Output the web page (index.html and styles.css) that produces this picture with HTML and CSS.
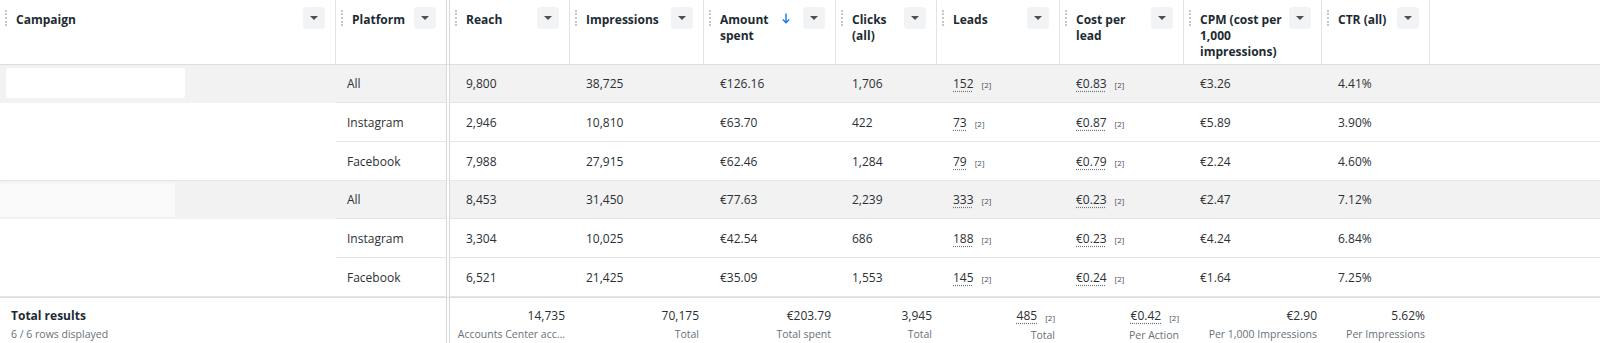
FILE: index.html
```html
<!DOCTYPE html>
<html>
<head>
<meta charset="utf-8">
<link rel="stylesheet" href="styles.css">
</head>
<body>
<div class="tbl">
  <div class="row head">
    <div class="hc"><span class="handle"></span><span class="ht">Campaign</span><span class="dd"><i class="tri"></i></span></div>
    <div class="hc nob"><span class="handle"></span><span class="ht">Platform</span><span class="dd"><i class="tri"></i></span></div>
    <div class="dbl"></div>
    <div class="hc"><span class="handle"></span><span class="ht">Reach</span><span class="dd"><i class="tri"></i></span></div>
    <div class="hc"><span class="handle"></span><span class="ht">Impressions</span><span class="dd"><i class="tri"></i></span></div>
    <div class="hc"><span class="handle"></span><span class="ht">Amount<br>spent</span><svg class="sort" width="8" height="11" viewBox="0 0 8 11"><path d="M4 0.5V9.5M0.8 6.5L4 9.7L7.2 6.5" fill="none" stroke="#1877f2" stroke-width="1.4"/></svg><span class="dd"><i class="tri"></i></span></div>
    <div class="hc"><span class="handle"></span><span class="ht">Clicks<br>(all)</span><span class="dd"><i class="tri"></i></span></div>
    <div class="hc"><span class="handle"></span><span class="ht">Leads</span><span class="dd"><i class="tri"></i></span></div>
    <div class="hc"><span class="handle"></span><span class="ht">Cost per<br>lead</span><span class="dd"><i class="tri"></i></span></div>
    <div class="hc"><span class="handle"></span><span class="ht">CPM (cost per<br>1,000<br>impressions)</span><span class="dd"><i class="tri"></i></span></div>
    <div class="hc"><span class="handle"></span><span class="ht">CTR (all)</span><span class="dd"><i class="tri"></i></span></div>
    <div class="hfill"></div>
  </div>

  <div class="row first">
    <div class="c camp"><div class="redact r1"></div></div>
    <div class="c plat">All</div>
    <div class="dbl"></div>
    <div class="c">9,800</div>
    <div class="c">38,725</div>
    <div class="c">€126.16</div>
    <div class="c">1,706</div>
    <div class="c"><span class="u">152</span><span class="ref">[2]</span></div>
    <div class="c"><span class="u">€0.83</span><span class="ref">[2]</span></div>
    <div class="c">€3.26</div>
    <div class="c">4.41%</div>
    <div class="c"></div>
  </div>
  <div class="row">
    <div class="c camp"></div>
    <div class="c plat">Instagram</div>
    <div class="dbl"></div>
    <div class="c">2,946</div>
    <div class="c">10,810</div>
    <div class="c">€63.70</div>
    <div class="c">422</div>
    <div class="c"><span class="u">73</span><span class="ref">[2]</span></div>
    <div class="c"><span class="u">€0.87</span><span class="ref">[2]</span></div>
    <div class="c">€5.89</div>
    <div class="c">3.90%</div>
    <div class="c"></div>
  </div>
  <div class="row last">
    <div class="c camp"></div>
    <div class="c plat">Facebook</div>
    <div class="dbl"></div>
    <div class="c">7,988</div>
    <div class="c">27,915</div>
    <div class="c">€62.46</div>
    <div class="c">1,284</div>
    <div class="c"><span class="u">79</span><span class="ref">[2]</span></div>
    <div class="c"><span class="u">€0.79</span><span class="ref">[2]</span></div>
    <div class="c">€2.24</div>
    <div class="c">4.60%</div>
    <div class="c"></div>
  </div>

  <div class="row first">
    <div class="c camp"><div class="redact r2"></div></div>
    <div class="c plat">All</div>
    <div class="dbl"></div>
    <div class="c">8,453</div>
    <div class="c">31,450</div>
    <div class="c">€77.63</div>
    <div class="c">2,239</div>
    <div class="c"><span class="u">333</span><span class="ref">[2]</span></div>
    <div class="c"><span class="u">€0.23</span><span class="ref">[2]</span></div>
    <div class="c">€2.47</div>
    <div class="c">7.12%</div>
    <div class="c"></div>
  </div>
  <div class="row">
    <div class="c camp"></div>
    <div class="c plat">Instagram</div>
    <div class="dbl"></div>
    <div class="c">3,304</div>
    <div class="c">10,025</div>
    <div class="c">€42.54</div>
    <div class="c">686</div>
    <div class="c"><span class="u">188</span><span class="ref">[2]</span></div>
    <div class="c"><span class="u">€0.23</span><span class="ref">[2]</span></div>
    <div class="c">€4.24</div>
    <div class="c">6.84%</div>
    <div class="c"></div>
  </div>
  <div class="row last">
    <div class="c camp"></div>
    <div class="c plat">Facebook</div>
    <div class="dbl"></div>
    <div class="c">6,521</div>
    <div class="c">21,425</div>
    <div class="c">€35.09</div>
    <div class="c">1,553</div>
    <div class="c"><span class="u">145</span><span class="ref">[2]</span></div>
    <div class="c"><span class="u">€0.24</span><span class="ref">[2]</span></div>
    <div class="c">€1.64</div>
    <div class="c">7.25%</div>
    <div class="c"></div>
  </div>

  <div class="row foot">
    <div class="fc total"><div class="fv">Total results</div><div class="fl">6 / 6 rows displayed</div></div>
    <div class="dbl"></div>
    <div class="fc"><div class="fv">14,735</div><div class="fl">Accounts Center acc...</div></div>
    <div class="fc"><div class="fv">70,175</div><div class="fl">Total</div></div>
    <div class="fc"><div class="fv">€203.79</div><div class="fl">Total spent</div></div>
    <div class="fc"><div class="fv">3,945</div><div class="fl">Total</div></div>
    <div class="fc"><div class="fv"><span class="u">485</span><span class="ref">[2]</span></div><div class="fl">Total</div></div>
    <div class="fc"><div class="fv"><span class="u">€0.42</span><span class="ref">[2]</span></div><div class="fl">Per Action</div></div>
    <div class="fc"><div class="fv">€2.90</div><div class="fl">Per 1,000 Impressions</div></div>
    <div class="fc"><div class="fv">5.62%</div><div class="fl">Per Impressions</div></div>
    <div class="fc"></div>
  </div>
</div>
</body>
</html>
```

FILE: styles.css
```css
* { box-sizing: border-box; }
html, body { margin: 0; padding: 0; background: #fff; }
body {
  font-family: "Open Sans", "Noto Sans", sans-serif;
  font-size: 12px;
  color: #1c2b33;
  width: 1600px;
  height: 343px;
  overflow: hidden;
}
.tbl { width: 1600px; }
.row {
  display: grid;
  grid-template-columns: 336px 110px 4px 120px 134px 132px 101px 123px 124px 138px 108px 1fr;
  height: 39px;
}
.dbl {
  border-left: 1px solid #d6d8db;
  border-right: 1px solid #d6d8db;
  background: #fff;
}

/* header */
.row.head { height: 65px; border-bottom: 1px solid #dadde1; }
.hc {
  display: flex;
  align-items: flex-start;
  padding: 7px 10px 0 5px;
  border-right: 1px solid #e1e3e6;
}
.hc.nob { border-right: none; }
.handle {
  flex-shrink: 0;
  width: 2px;
  height: 16px;
  margin-top: 3px;
  border-left: 2px dotted #c4c8cd;
}
.ht {
  flex: 1;
  margin-left: 9px;
  padding-top: 5px;
  font-weight: 700;
  line-height: 16px;
  white-space: nowrap;
  color: #1c2b33;
}
.sort { flex-shrink: 0; margin: 6px 13px 0 0; }
.dd {
  flex-shrink: 0;
  width: 22px;
  height: 22px;
  border-radius: 4px;
  background: #f2f3f4;
  display: flex;
  align-items: center;
  justify-content: center;
}
.tri {
  width: 0;
  height: 0;
  border-left: 4px solid transparent;
  border-right: 4px solid transparent;
  border-top: 4px solid #4b4f56;
}

/* body rows */
.row.first { height: 38px; background: #f2f2f2; }
.c {
  display: flex;
  align-items: center;
  padding-left: 16px;
  border-bottom: 1px solid #e4e6e9;
  white-space: nowrap;
  color: #2b3035;
}
.c.plat { padding-left: 11px; }
.c.camp { border-bottom-color: transparent; padding: 0; align-items: flex-start; }
.row.last .c.camp { border-bottom-color: #e4e6e9; }
.redact { border-radius: 2px; }
.redact.r1 { margin: 3px 0 0 6px; width: 179px; height: 30px; background: #fff; }
.redact.r2 { margin: 2px 0 0 0; width: 175px; height: 34px; background: #f9f9f9; }
.u {
  text-decoration: underline dotted #6b7278;
  text-underline-offset: 3px;
}
.ref {
  font-size: 8px;
  margin-left: 8px;
  color: #4b4f56;
  position: relative;
  top: 1px;
}

/* footer */
.row.foot { height: 46px; border-top: 1px solid #dadde1; }
.fc {
  padding: 9px 5px 0 0;
  text-align: right;
  white-space: nowrap;
}
.fc.total { grid-column: span 2; text-align: left; padding-left: 11px; }
.fc.total .fv { font-weight: 700; color: #1c2b33; }
.fv { line-height: 18px; color: #2b3035; }
.fl { font-size: 10.5px; line-height: 19px; color: #67717a; }
```
